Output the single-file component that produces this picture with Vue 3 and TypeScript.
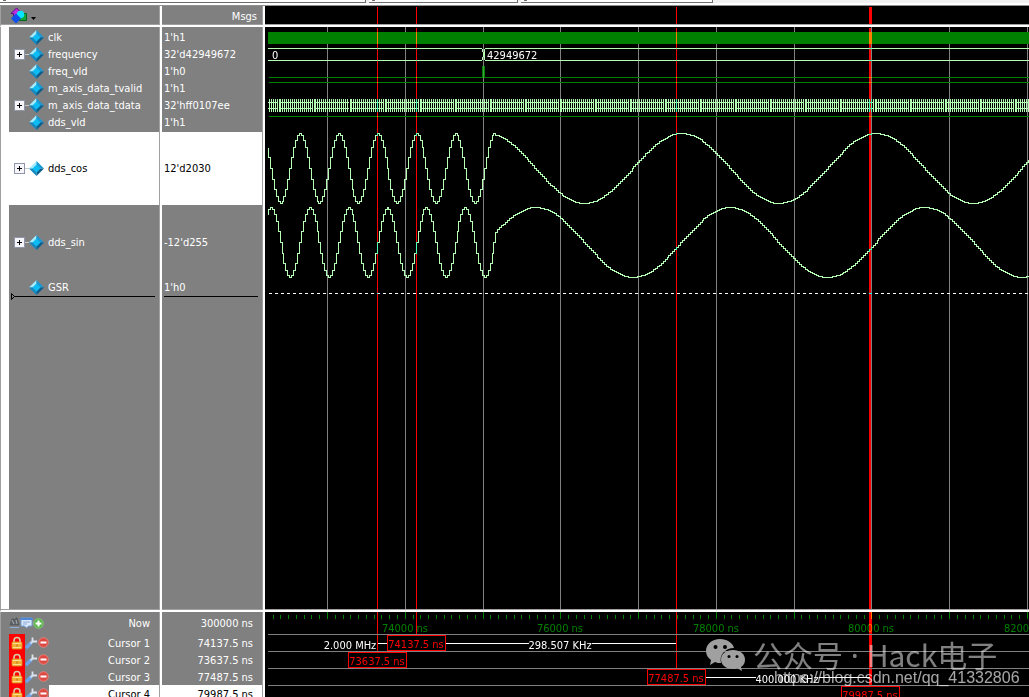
<script setup lang="ts">
interface Signal {
  name: string
  value: string
  kind: 'single' | 'vector' | 'analog'
  selected?: boolean
  insert?: boolean
}

interface Cursor {
  name: string
  time: number
  bottom: number
  selected?: boolean
}

const signals: Signal[] = [
  { name: 'clk', value: "1'h1", kind: 'single' },
  { name: 'frequency', value: "32'd42949672", kind: 'vector' },
  { name: 'freq_vld', value: "1'h0", kind: 'single' },
  { name: 'm_axis_data_tvalid', value: "1'h1", kind: 'single' },
  { name: 'm_axis_data_tdata', value: "32'hff0107ee", kind: 'vector' },
  { name: 'dds_vld', value: "1'h1", kind: 'single' },
  { name: 'dds_cos', value: "12'd2030", kind: 'analog', selected: true },
  { name: 'dds_sin', value: "-12'd255", kind: 'analog' },
  { name: 'GSR', value: "1'h0", kind: 'single', insert: true },
]

const cursors: Cursor[] = [
  { name: 'Cursor 1', time: 74137.5, bottom: 23 },
  { name: 'Cursor 2', time: 73637.5, bottom: 40 },
  { name: 'Cursor 3', time: 77487.5, bottom: 57 },
  { name: 'Cursor 4', time: 79987.5, bottom: 74, selected: true },
]

const END = 2400
const timeToX = (t: number): number => Math.floor(62.55 + (t - 73000) * 0.07777)

const gridTimes = Array.from({ length: 28 }, (_, i) => 73000 + i * 1000)
const gridLines = gridTimes.map((t) => timeToX(t) + 0.5)
const labels = gridTimes.filter((t) => t % 2000 === 0).map((t) => ({ x: timeToX(t), text: `${t} ns` }))
const minorTicks = Array.from({ length: 300 }, (_, i) => timeToX(72300 + i * 100) + 0.5)

const cursorBars = cursors.map((c) => {
  const x = timeToX(c.time)
  return c.selected ? { x: x - 1, width: 3, bottom: c.bottom } : { x, width: 1, bottom: c.bottom }
})

const tags = cursors.map((c, i) => ({
  x: timeToX(c.time) - 29,
  y: 23 + i * 17,
  text: `${c.time} ns`,
}))

// Sampled waveform: the output frequency drops from 2 MHz to 400 kHz at the switch point.
const SAMPLE = 1.9444
const PEAK = 35
const SWITCH = 230
function wave(center: number, phase: number): string {
  let d = ''
  for (let i = -17; i < 1200; i++) {
    const mid = PEAK + i * SAMPLE
    const start = Math.max(3, Math.round(mid - SAMPLE / 2))
    const cycles = mid < SWITCH ? (mid - PEAK) / 38.89 : (mid - 222) / 194.5
    const level = Math.round(center - 35 * Math.cos(2 * Math.PI * (cycles - phase))) + 0.5
    d += d ? `H${start + 0.5}V${level}` : `M${start + 0.5} ${level}`
  }
  return d
}
const cosPath = wave(141, 0)
const sinPath = wave(215, 0.25)

// The data bus changes every other pixel; a wide tooth follows each break.
const combBreaks = Array.from({ length: 70 }, (_, i) => Math.round(14.4 + (i - 1) * 35.05))
const combPath = (() => {
  let d = ''
  combBreaks.forEach((s, i) => {
    const next = combBreaks[i + 1] ?? s + 35
    if (s >= 3) d += `M${s + 0.5} 72V85`
    for (let x = s + 1; x < next - 1; x += 2) if (x >= 3) d += `M${x + 0.5} 72V85`
  })
  return d
})()
const visibleBreaks = combBreaks.filter((s) => s > 3)
</script>

<template>
  <main class="window">
    <div class="dock">
      <div class="dock-bar first"></div>
      <div class="dock-bar second"></div>
      <div class="dock-bar third"></div>
    </div>

    <header class="pane head names-head">
      <button class="menu" type="button" aria-label="Signal menu">
        <svg width="28" height="18" viewBox="0 0 28 18">
          <path d="M9.500 6.500h7v7h-7z" fill="#12a537" stroke="#07651d" />
          <path d="M1 6.500 6.500 1 12 6.500H9.500V10h-6V6.500z" fill="#c02be0" stroke="#5c0c80" />
          <circle cx="10.500" cy="7.500" r="3.800" fill="#08e4ff" />
          <path d="M6 6.500l5 5-5 5-5-5z" fill="#0d50ea" />
          <path d="M21 10h5l-2.500 3z" fill="#000" />
        </svg>
      </button>
    </header>
    <header class="pane head msgs-head">Msgs</header>
    <div class="wave-pane head">
      <svg class="plot" aria-hidden="true">
        <rect v-for="(c, i) in cursorBars" :key="i" class="cursor" :x="c.x" y="1" :width="c.width" height="100%" />
      </svg>
    </div>

    <section class="pane names">
      <ul class="list">
        <li v-for="s in signals" :key="s.name" class="row" :class="[s.kind, { selected: s.selected, insert: s.insert }]">
          <span class="expand-slot">
            <button v-if="s.kind !== 'single'" class="expand" type="button" :aria-label="`Expand ${s.name}`">
              <svg width="15" height="11" viewBox="0 0 15 11" shape-rendering="crispEdges">
                <path d="M11 5.500h4" stroke="#c8c8c8" />
                <rect x=".5" y=".5" width="10" height="10" fill="#f6f6fa" stroke="#9096a8" />
                <path d="M3 5.500h5M5.500 3v5" stroke="#000" />
              </svg>
            </button>
          </span>
          <svg class="diamond" width="15" height="15" viewBox="0 0 15 15">
            <path d="M7.500 0 0 7.500h4L7.500 4z" fill="#a4ecff" />
            <path d="M7.500 0 15 7.500h-4L7.500 4z" fill="#1898d4" />
            <path d="M0 7.500 7.500 15v-4L4 7.500z" fill="#1488c0" />
            <path d="M15 7.500 7.500 15v-4L11 7.500z" fill="#075f8f" />
            <path d="M7.500 3.500l4 4-4 4-4-4z" fill="#0cbcf4" />
          </svg>
          <span class="label">{{ s.name }}</span>
          <svg v-if="s.insert" class="pointer" width="4" height="7" viewBox="0 0 4 7">
            <path d="M.5.500 3.500 3.500l-3 3z" fill="#808080" stroke="#000" />
          </svg>
        </li>
      </ul>
    </section>
    <section class="pane values">
      <ul class="list">
        <li v-for="s in signals" :key="s.name" class="row" :class="[s.kind, { selected: s.selected, insert: s.insert }]">
          {{ s.value }}
        </li>
      </ul>
    </section>
    <section class="wave-pane">
      <svg class="plot" shape-rendering="crispEdges" aria-label="Waveforms">
        <line v-for="x in gridLines" :key="x" class="grid" :x1="x" y1="0" :x2="x" y2="100%" />
        <rect x="3" y="5" :width="END" height="12" fill="#008000" />
        <path class="bus" d="M3 21.500H217M3 33.500H217M217.500 22v3M218.500 25v5M217.500 30v3M219.500 22v11M220 21.500H2400M220 33.500H2400" />
        <text class="bus-text" x="7" y="32">0</text>
        <text class="bus-text" x="222" y="32">42949672</text>
        <path class="bit" d="M4 50.500H2400M4 55.500H2400M4 89.500H2400" />
        <rect x="217" y="39" width="3" height="12" fill="#008000" />
        <rect x="218" y="39" width="1" height="12" fill="#40a040" />
        <path class="bus" d="M3 75.500H2400M3 81.500H2400" />
        <path class="bus" :d="combPath" />
        <rect v-for="x in visibleBreaks" :key="x" :x="x - 1" y="75" width="1" height="7" fill="#000" />
        <path class="bus" :d="cosPath" />
        <path class="bus" :d="sinPath" />
        <path class="idle" d="M4 266.500H2400" />
        <rect v-for="(c, i) in cursorBars" :key="i" class="cursor" :x="c.x" y="1" :width="c.width" height="100%" />
      </svg>
    </section>

    <section class="pane foot foot-names">
      <div class="now-row">
        <span class="tools">
          <button type="button" aria-label="Find">
            <svg width="11" height="12" viewBox="0 0 11 12">
              <path d="M1 8 3 2h2l.5 2L7 1h1l2 7z" fill="#606468" stroke="#45494d" stroke-width=".6" />
              <path d="M3 3l2 4M7 3l1 4" stroke="#a8adb2" />
              <path d="M1 10.500h9" stroke="#8fb0e0" />
            </svg>
          </button>
          <button type="button" aria-label="Properties">
            <svg width="13" height="12" viewBox="0 0 13 12">
              <path d="M1 1h11v8H8.500l-2 2-2-2H1z" fill="#dce9fa" stroke="#6f9cd8" />
              <path d="M.5 2h12" stroke="#4d86d6" stroke-width="2" />
              <path d="M3 5h7M3 7h4" stroke="#89a9d4" />
            </svg>
          </button>
          <button type="button" aria-label="Add cursor">
            <svg width="11" height="11" viewBox="0 0 11 11">
              <circle cx="5.500" cy="5.500" r="4.800" fill="#57b548" stroke="#8bd07c" stroke-width=".8" />
              <path d="M5.500 2.500v6M2.500 5.500h6" stroke="#fff" stroke-width="2" />
            </svg>
          </button>
        </span>
        <span>Now</span>
      </div>
      <div v-for="c in cursors" :key="c.name" class="cursor-row">
        <span class="tools">
          <button class="lock" type="button" :aria-label="`Unlock ${c.name}`">
            <svg width="12" height="15" viewBox="0 0 12 15">
              <path d="M3 8V5.500a3 3 0 0 1 6 0V8" fill="none" stroke="#d8cda8" stroke-width="1.600" />
              <rect x="1" y="7" width="10" height="7" rx="1" fill="#f3ae35" stroke="#e0a030" stroke-width=".7" />
              <path d="M2 8.500h8M2 12.500h8" stroke="#ffe08c" />
              <path d="M6 9.500v2" stroke="#a96f12" />
            </svg>
          </button>
          <button class="edit" type="button" :aria-label="`Edit ${c.name}`">
            <svg width="12" height="12" viewBox="0 0 12 12">
              <path d="M2 10 5.500 6.500" stroke="#6da3ea" stroke-width="3.400" stroke-linecap="round" />
              <path d="M5.500 6.500 8 4" stroke="#c7d8ee" stroke-width="2.400" />
              <path d="M7.500.500v3.500l1 .5H12" fill="none" stroke="#dbe4ee" stroke-width="1.800" />
            </svg>
          </button>
          <button type="button" :aria-label="`Delete ${c.name}`">
            <svg width="11" height="11" viewBox="0 0 11 11">
              <circle cx="5.500" cy="5.500" r="4.800" fill="#dd4a43" stroke="#ef8a80" stroke-width=".8" />
              <path d="M2.500 5.500h6" stroke="#fff" stroke-width="2" />
            </svg>
          </button>
        </span>
        <span class="cursor-name" :class="{ selected: c.selected }">{{ c.name }}</span>
      </div>
    </section>
    <section class="pane foot">
      <div class="now-row value">300000 ns</div>
      <div v-for="c in cursors" :key="c.name" class="cursor-row value" :class="{ selected: c.selected }">{{ c.time }} ns</div>
    </section>
    <section class="wave-pane foot">
      <svg class="plot" aria-label="Timeline">
        <g shape-rendering="crispEdges">
          <line v-for="x in minorTicks" :key="x" class="tick" :x1="x" y1="3" :x2="x" y2="7" />
          <line v-for="x in gridLines" :key="x" class="tick" :x1="x" y1="0" :x2="x" y2="7" />
          <path class="grid" d="M3 22.500H2400M3 39.500H2400M3 56.500H2400M3 73.500H2400" />
        </g>
        <text v-for="l in labels" :key="l.x" class="time" :x="l.x" y="20">{{ l.text }}</text>
        <rect v-for="(c, i) in cursorBars" :key="i" class="cursor" :x="c.x" y="0" :width="c.width" :height="c.bottom" />
        <path class="span" d="M113 31.500H122M181 31.500H264M327 31.500H411M441 65.500H491M554 65.500H605" shape-rendering="crispEdges" />
        <text class="measure" x="85" y="37">2.000 MHz</text>
        <text class="measure" x="295" y="37">298.507 KHz</text>
        <text class="measure" x="522" y="71">400.000 KHz</text>
        <g v-for="t in tags" :key="t.text">
          <rect class="tag" :x="t.x + 0.5" :y="t.y + 0.5" width="58" height="15" shape-rendering="crispEdges" />
          <text class="tag-text" :x="t.x + 29" :y="t.y + 13">{{ t.text }}</text>
        </g>
        <g class="mark">
          <path d="M455 27c-8 0-14 5-14 12 0 4 2 7 5 9l-1 5 5-3c2 1 4 1 6 1-2-8 4-15 13-15-1-5-7-9-14-9z" />
          <path d="M468 38c-7 0-12 4-12 9.500S461 57 468 57c2 0 3 0 4-1l5 3-1-4c3-2 4-4 4-7.500 0-5.500-5-9.500-12-9.500z" />
          <g class="eyes">
            <circle cx="450.500" cy="35" r="2" /><circle cx="460" cy="35" r="2" />
            <circle cx="464" cy="44.500" r="1.500" /><circle cx="472" cy="44.500" r="1.500" />
          </g>
        </g>
        <text class="brand" x="488" y="55">公众号<tspan class="dot"> · </tspan>Hack电子</text>
        <text class="url" x="509" y="71">https://blog.csdn.net/qq_41332806</text>
      </svg>
    </section>
  </main>
</template>

<style>
body {
  margin: 0;
}
</style>

<style scoped>
.window {
  display: grid;
  grid-template-columns: 162px 103px minmax(0, 1fr);
  grid-template-rows: 6px 21px minmax(0, 1fr) 85px;
  width: 100%;
  height: 100vh;
  overflow: hidden;
  background: #fff;
  color: #fff;
  font: 11px/17px "DejaVu Sans Condensed", "DejaVu Sans", sans-serif;
}

.dock {
  grid-column: 1 / -1;
  display: flex;
  gap: 3px;
  box-sizing: border-box;
  border-bottom: 1px solid #909090;
  background: linear-gradient(#f0f0f0 3px, #fff 3px);
}

.dock-bar {
  box-sizing: border-box;
  height: 3px;
  border-right: 1px solid #6d6d6d;
  border-bottom: 1px solid #6d6d6d;
  background: linear-gradient(#707070, #707070) 3px 0 / 3px 1px no-repeat #fff;
}

.first {
  width: 366px;
}

.second {
  width: 149px;
}

.third {
  width: 192px;
}

.pane {
  box-sizing: border-box;
  padding-right: 1px;
  border-right: 2px solid #fff;
  background: #808080;
  box-shadow: inset -1px 0 #a0a0a0;
  overflow: hidden;
}

.names-head,
.names,
.foot-names {
  border-left: 1px solid #a0a0a0;
}

.head,
.names,
.values,
.wave-pane {
  border-bottom: 2px solid #fff;
}

.pane.head {
  box-shadow: inset -1px -1px #a0a0a0;
}

.names,
.values {
  padding-bottom: 1px;
  box-shadow: inset -1px -1px #a0a0a0;
}

.wave-pane {
  box-sizing: border-box;
  padding-bottom: 1px;
  background: linear-gradient(#a0a0a0, #a0a0a0) bottom / 100% 1px no-repeat #000;
  overflow: hidden;
}

.wave-pane.foot {
  padding-bottom: 0;
  border-bottom: 0;
  background: #000;
}

.names-head {
  display: flex;
  align-items: center;
}

.msgs-head {
  padding-right: 6px;
  line-height: 21px;
  text-align: right;
}

button {
  display: block;
  margin: 0;
  padding: 0;
  border: 0;
  background: none;
}

svg {
  display: block;
}

.menu {
  margin-left: 9px;
}

.list {
  display: flow-root;
  box-sizing: border-box;
  height: 100%;
  margin: 0;
  padding: 2px 0 0;
  background: #808080;
  list-style: none;
}

.names .list {
  border-left: 8px solid #fff;
}

.row {
  position: relative;
  display: flex;
  align-items: center;
  box-sizing: border-box;
  height: 17px;
}

.values .row {
  padding-left: 2px;
}

.row.analog {
  height: 74px;
}

.row.selected {
  border-top: 1px solid #808080;
  background: #fff;
  color: #000;
}

.row.insert {
  height: 18px;
  border-bottom: 1px solid #000;
}

.names .row.insert {
  margin-right: 4px;
  margin-left: 3px;
}

.values .row.insert {
  margin: 0 4px 0 2px;
  padding-left: 0;
}

.expand-slot {
  flex: none;
  width: 15px;
  margin-left: 5px;
}

.insert .expand-slot {
  margin-left: 2px;
}

.diamond {
  flex: none;
}

.label {
  margin-left: 4px;
}

.pointer {
  position: absolute;
  bottom: -4px;
  left: -1px;
}

.now-row,
.cursor-row {
  display: flex;
  align-items: center;
  justify-content: space-between;
  height: 17px;
}

.now-row {
  height: 22px;
  padding-right: 9px;
}

.now-row .tools {
  padding-left: 8px;
}

.tools {
  display: flex;
  align-items: center;
}

.cursor-row {
  padding-left: 8px;
  line-height: 19px;
}

.foot-names .cursor-row {
  align-items: stretch;
}

.value {
  justify-content: flex-end;
  padding-right: 9px;
}

.cursor-row.value {
  align-items: flex-start;
}

.value.selected,
.cursor-name.selected {
  background: #fff;
  color: #000;
}

.lock {
  width: 16px;
  height: 17px;
  padding-left: 2px;
  background: #f00;
}

.edit {
  width: 13px;
}

.cursor-name {
  flex: 1;
  padding-right: 9px;
  text-align: right;
}

.plot {
  width: 100%;
  height: 100%;
  isolation: isolate;
  background: #000;
}

.grid {
  stroke: #808080;
}

.tick,
.bit {
  fill: none;
  stroke: #008000;
}

.bus {
  fill: none;
  stroke: #b4ffb4;
}

.idle {
  stroke: #fff;
  stroke-dasharray: 3 3;
}

.cursor {
  fill: #f00;
  mix-blend-mode: difference;
}

.bus-text,
.measure {
  fill: #fff;
}

.time {
  fill: #008000;
  text-anchor: middle;
}

.span {
  stroke: #fff;
}

.measure {
  text-anchor: middle;
}

.tag {
  fill: #000;
  stroke: #f00;
}

.tag-text {
  fill: #f00;
  text-anchor: middle;
}

.mark {
  fill: #a0a0a0;
}

.eyes {
  fill: #000;
}

.brand {
  fill: #fff;
  fill-opacity: 0.5;
  font: 30px "Noto Sans CJK SC", sans-serif;
  white-space: pre;
}

.dot {
  font-family: "Noto Sans", sans-serif;
}

.url {
  fill: #fff;
  fill-opacity: 0.65;
  font: 16px "Liberation Sans", Arial, sans-serif;
}
</style>
